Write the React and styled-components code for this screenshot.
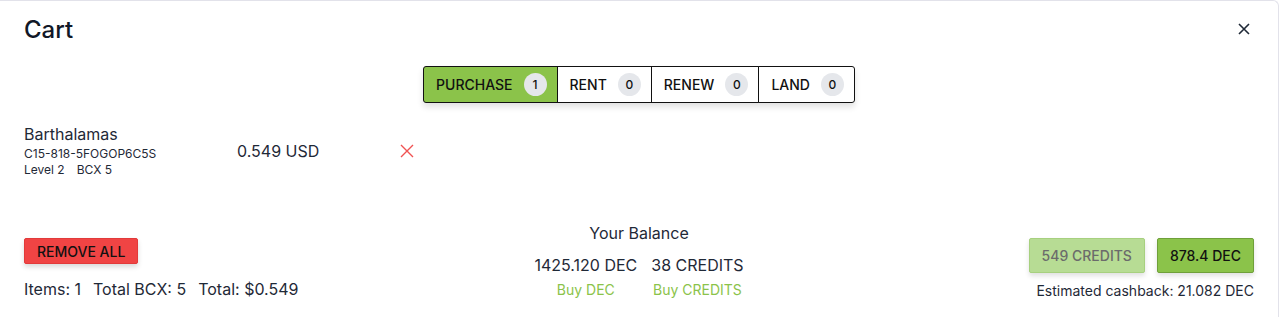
import React, { useState } from "react";
import styled, { createGlobalStyle } from "styled-components";

const GlobalStyle = createGlobalStyle`
  body {
    margin: 0;
    background: #ffffff;
    font-family: Inter, "Noto Sans", sans-serif;
    color: #1f2937;
  }
  * { box-sizing: border-box; }
`;

const green = "#8bc34a";

export default function App() {
  const [tab, setTab] = useState("PURCHASE");
  const tabs = [
    { name: "PURCHASE", count: 1 },
    { name: "RENT", count: 0 },
    { name: "RENEW", count: 0 },
    { name: "LAND", count: 0 },
  ];

  return (
    <>
      <GlobalStyle />
      <Modal>
        <Header>
          <Title>Cart</Title>
          <CloseButton aria-label="close">
            <svg width="12" height="12" viewBox="0 0 12 12">
              <path d="M1 1 L11 11 M11 1 L1 11" stroke="#1f2937" strokeWidth="1.6" />
            </svg>
          </CloseButton>
        </Header>

        <TabRow>
          <TabGroup>
            {tabs.map((t) => (
              <Tab key={t.name} $active={tab === t.name} onClick={() => setTab(t.name)}>
                {t.name}
                <Badge>{t.count}</Badge>
              </Tab>
            ))}
          </TabGroup>
        </TabRow>

        <ItemRow>
          <ItemInfo>
            <ItemName>Barthalamas</ItemName>
            <ItemMeta $first>C15-818-5FOGOP6C5S</ItemMeta>
            <ItemMeta>
              <span>Level 2</span>
              <span>BCX 5</span>
            </ItemMeta>
          </ItemInfo>
          <Price>0.549 USD</Price>
          <RemoveIcon aria-label="remove">
            <svg width="14" height="14" viewBox="0 0 14 14">
              <path d="M1 1 L13 13 M13 1 L1 13" stroke="#f05252" strokeWidth="1.4" />
            </svg>
          </RemoveIcon>
        </ItemRow>

        <Footer>
          <FooterLeft>
            <RemoveAll>REMOVE ALL</RemoveAll>
            <Totals>
              <span>Items: 1</span>
              <span>Total BCX: 5</span>
              <span>Total: $0.549</span>
            </Totals>
          </FooterLeft>

          <Balance>
            <BalanceTitle>Your Balance</BalanceTitle>
            <BalanceGrid>
              <BalanceValue>1425.120 DEC</BalanceValue>
              <BalanceValue>38 CREDITS</BalanceValue>
              <BuyLink>Buy DEC</BuyLink>
              <BuyLink>Buy CREDITS</BuyLink>
            </BalanceGrid>
          </Balance>

          <FooterRight>
            <PayButtons>
              <PayButton $disabled>549 CREDITS</PayButton>
              <PayButton>878.4 DEC</PayButton>
            </PayButtons>
            <Cashback>Estimated cashback: 21.082 DEC</Cashback>
          </FooterRight>
        </Footer>
      </Modal>
    </>
  );
}

const Modal = styled.div`
  width: 1279px;
  height: 317px;
  border-top: 1px solid #e2e2ea;
  border-right: 1px solid #e2e2ea;
  border-top-right-radius: 6px;
  background: #fff;
  padding: 0 24px;
  display: flex;
  flex-direction: column;
`;

const Header = styled.div`
  display: flex;
  justify-content: space-between;
  align-items: center;
  height: 56px;
`;

const Title = styled.h2`
  margin: 0;
  font-size: 24px;
  font-weight: 500;
  color: #111827;
`;

const CloseButton = styled.button`
  border: none;
  background: none;
  padding: 0;
  margin-right: 4px;
  display: flex;
  cursor: pointer;
`;

const TabRow = styled.div`
  display: flex;
  justify-content: center;
  margin-top: 9px;
`;

const TabGroup = styled.div`
  display: flex;
  box-shadow: 0 4px 6px rgba(0, 0, 0, 0.12);
  border-radius: 3px;
`;

const Tab = styled.button`
  display: flex;
  align-items: center;
  gap: 11px;
  height: 37px;
  padding: 0 10px 0 12px;
  border: 1px solid #111;
  margin-left: -1px;
  background: ${(p) => (p.$active ? green : "#fff")};
  font-family: Inter, sans-serif;
  font-size: 14px;
  font-weight: 500;
  color: #111;
  cursor: pointer;
  &:first-child {
    margin-left: 0;
    border-radius: 3px 0 0 3px;
  }
  &:last-child {
    border-radius: 0 3px 3px 0;
  }
`;

const Badge = styled.span`
  width: 23px;
  height: 23px;
  border-radius: 50%;
  background: #e5e7eb;
  display: flex;
  align-items: center;
  justify-content: center;
  font-size: 12px;
  font-weight: 500;
`;

const ItemRow = styled.div`
  display: flex;
  align-items: center;
  margin-top: 21px;
`;

const ItemInfo = styled.div`
  width: 213px;
  display: flex;
  flex-direction: column;
`;

const ItemName = styled.div`
  font-size: 16px;
  line-height: 20px;
`;

const ItemMeta = styled.div`
  font-size: 12px;
  line-height: 16px;
  display: flex;
  gap: 12px;
  margin-top: ${(p) => (p.$first ? "2px" : "0")};
`;

const Price = styled.div`
  font-size: 16px;
  width: 163px;
`;

const RemoveIcon = styled.button`
  border: none;
  background: none;
  padding: 0;
  display: flex;
  cursor: pointer;
`;

const Footer = styled.div`
  display: flex;
  justify-content: space-between;
  align-items: flex-start;
  margin-top: 45px;
`;

const FooterLeft = styled.div`
  display: flex;
  flex-direction: column;
  align-items: flex-start;
  width: 320px;
  padding-top: 15px;
`;

const RemoveAll = styled.button`
  background: #f04444;
  border: 1px solid #e23a3a;
  border-radius: 2px;
  height: 26px;
  padding: 0 12px;
  font-family: Inter, sans-serif;
  font-size: 14px;
  font-weight: 500;
  color: #111;
  box-shadow: 0 3px 5px rgba(0, 0, 0, 0.15);
  cursor: pointer;
`;

const Totals = styled.div`
  display: flex;
  gap: 12px;
  margin-top: 15px;
  font-size: 16px;
`;

const Balance = styled.div`
  display: flex;
  flex-direction: column;
  align-items: center;
`;

const BalanceTitle = styled.div`
  font-size: 16px;
  line-height: 20px;
`;

const BalanceGrid = styled.div`
  display: grid;
  grid-template-columns: auto auto;
  column-gap: 14px;
  justify-items: center;
  margin-top: 12px;
`;

const BalanceValue = styled.div`
  font-size: 16px;
  line-height: 20px;
`;

const BuyLink = styled.a`
  font-size: 14px;
  line-height: 20px;
  margin-top: 5px;
  color: #8bc34a;
  cursor: pointer;
`;

const FooterRight = styled.div`
  display: flex;
  flex-direction: column;
  align-items: flex-end;
  width: 320px;
  padding-top: 15px;
`;

const PayButtons = styled.div`
  display: flex;
  gap: 12px;
`;

const PayButton = styled.button`
  height: 35px;
  padding: 0 12px;
  border-radius: 2px;
  border: 1px solid ${(p) => (p.$disabled ? "#a7d07f" : "#6fa03a")};
  background: ${(p) => (p.$disabled ? "#b7dc94" : green)};
  color: ${(p) => (p.$disabled ? "#6b6b6b" : "#111")};
  font-family: Inter, sans-serif;
  font-size: 14px;
  font-weight: 500;
  box-shadow: 0 3px 5px rgba(0, 0, 0, 0.12);
  cursor: pointer;
`;

const Cashback = styled.div`
  font-size: 14px;
  margin-top: 9px;
`;
